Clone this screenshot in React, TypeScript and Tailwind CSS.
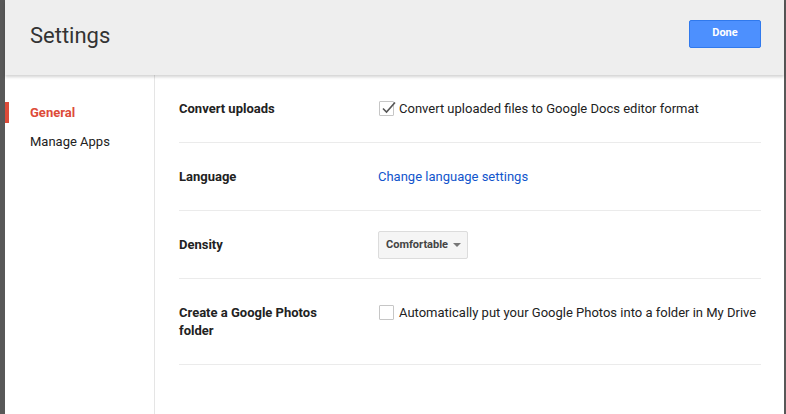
import React from 'react';

const ROWS = [
  { label: 'Convert uploads', kind: 'check', checked: true, text: 'Convert uploaded files to Google Docs editor format' },
  { label: 'Language', kind: 'link', text: 'Change language settings' },
  { label: 'Density', kind: 'select', text: 'Comfortable' },
  { label: 'Create a Google Photos folder', kind: 'check', checked: false, text: 'Automatically put your Google Photos into a folder in My Drive' },
];

const Checkbox: React.FC<{ checked: boolean }> = ({ checked }) => (
  <span className="relative w-[15px] h-[15px] shrink-0 mt-[1px] border border-[#c6c6c6] rounded-[1px] bg-white">
    {checked && (
      <svg className="absolute left-[0px] top-[-3px] w-[17px] h-[17px]" viewBox="0 0 17 17" fill="none">
        <path d="M3 9.5l3.5 3.5L15 3.5" stroke="#555" strokeWidth="1.6" />
      </svg>
    )}
  </span>
);

const App: React.FC = () => {
  return (
    <div className="w-[786px] h-[414px] flex bg-white overflow-hidden font-['Roboto',_'Liberation_Sans',_sans-serif] text-[13px] text-[#222]">
      <div className="w-[5px] bg-[#585858] shrink-0" />
      <div className="flex-1 flex flex-col min-w-0">
        {/* Header */}
        <header className="h-[75px] shrink-0 bg-[#eeeeee] flex items-center justify-between pl-[25px] pr-[23px] shadow-[0_2px_3px_rgba(0,0,0,0.18)] relative z-10">
          <h1 className="text-[22px] text-[#333] leading-none mb-[4px]">Settings</h1>
          <button className="w-[72px] h-[28px] mb-[8px] bg-[#4d90fe] border border-[#3079ed] rounded-[2px] text-white text-[11px] font-bold">
            Done
          </button>
        </header>

        <div className="flex-1 flex">
          {/* Sidebar */}
          <nav className="w-[150px] shrink-0 border-r border-[#e5e5e5] pt-[23px]">
            <div className="h-[29px] flex items-center">
              <span className="w-[4px] h-[21px] bg-[#dd4b39]" />
              <span className="ml-[21px] font-bold text-[#dd4b39]">General</span>
            </div>
            <div className="h-[29px] flex items-center pl-[25px] text-[#222]">Manage Apps</div>
          </nav>

          {/* Content */}
          <main className="flex-1 pl-[24px] pr-[23px]">
            {ROWS.map((r) => (
              <div key={r.label} className="flex border-b border-[#ebebeb] pt-[25px] pb-[24px] leading-[18px]">
                <div className="w-[199px] shrink-0 font-bold pr-[30px]">{r.label}</div>
                <div className="flex-1 flex items-start">
                  {r.kind === 'check' && (
                    <label className="flex items-start gap-[5px] pl-[1px]">
                      <Checkbox checked={!!r.checked} />
                      <span className="text-[#222]">{r.text}</span>
                    </label>
                  )}
                  {r.kind === 'link' && <a className="text-[#1155cc]">{r.text}</a>}
                  {r.kind === 'select' && (
                    <div className="-my-[5px] h-[28px] pl-[7px] pr-[6px] flex items-center gap-[5px] bg-[#f5f5f5] border border-[#dcdcdc] rounded-[2px] text-[11px] font-bold text-[#444]">
                      {r.text}
                      <span className="w-0 h-0 border-l-[4px] border-r-[4px] border-t-[4px] border-l-transparent border-r-transparent border-t-[#777]" />
                    </div>
                  )}
                </div>
              </div>
            ))}
          </main>
        </div>
      </div>
      <div className="w-[2px] bg-[#585858] shrink-0" />
    </div>
  );
};

export default App;
